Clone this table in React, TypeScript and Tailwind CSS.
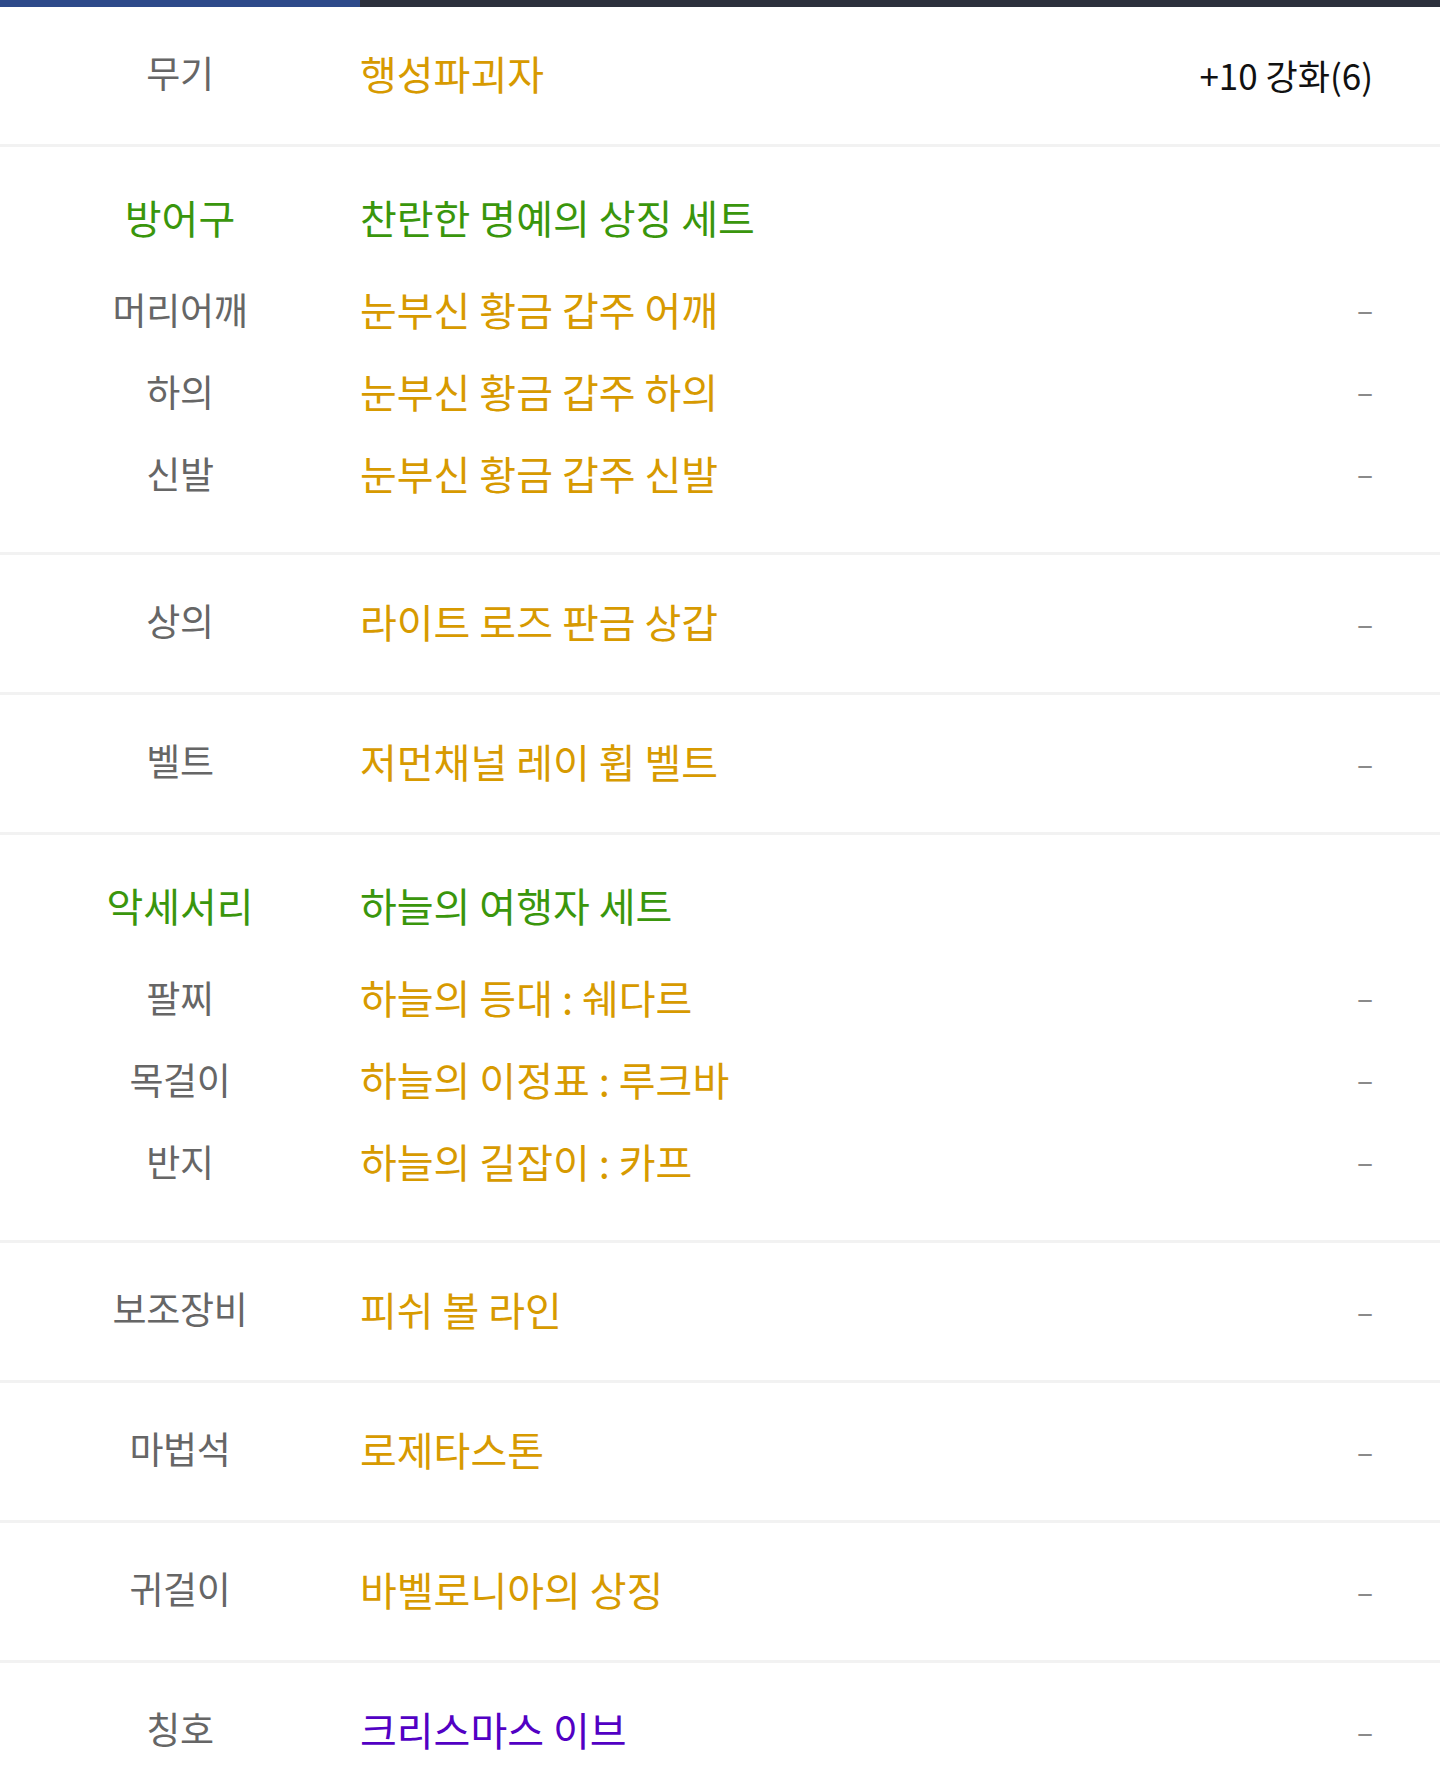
import React from "react";

type Item = { slot: string; name: string; value?: string; color?: "orange" | "purple" };
type Group = { title: string; set: string; items: Item[] };
type Entry = { kind: "single"; item: Item } | { kind: "group"; group: Group };

const entries: Entry[] = [
  { kind: "single", item: { slot: "무기", name: "행성파괴자", value: "+10 강화(6)" } },
  {
    kind: "group",
    group: {
      title: "방어구",
      set: "찬란한 명예의 상징 세트",
      items: [
        { slot: "머리어깨", name: "눈부신 황금 갑주 어깨" },
        { slot: "하의", name: "눈부신 황금 갑주 하의" },
        { slot: "신발", name: "눈부신 황금 갑주 신발" },
      ],
    },
  },
  { kind: "single", item: { slot: "상의", name: "라이트 로즈 판금 상갑" } },
  { kind: "single", item: { slot: "벨트", name: "저먼채널 레이 휩 벨트" } },
  {
    kind: "group",
    group: {
      title: "악세서리",
      set: "하늘의 여행자 세트",
      items: [
        { slot: "팔찌", name: "하늘의 등대 : 쉐다르" },
        { slot: "목걸이", name: "하늘의 이정표 : 루크바" },
        { slot: "반지", name: "하늘의 길잡이 : 카프" },
      ],
    },
  },
  { kind: "single", item: { slot: "보조장비", name: "피쉬 볼 라인" } },
  { kind: "single", item: { slot: "마법석", name: "로제타스톤" } },
  { kind: "single", item: { slot: "귀걸이", name: "바벨로니아의 상징" } },
  { kind: "single", item: { slot: "칭호", name: "크리스마스 이브", color: "purple" } },
];

function Value({ value }: { value?: string }) {
  if (value) {
    return <span className="text-[35px] leading-none text-[#111111]">{value}</span>;
  }
  return <span className="text-[30px] leading-none text-[#8a8a8a]">–</span>;
}

function Line({ item, tall }: { item: Item; tall?: boolean }) {
  const nameColor = item.color === "purple" ? "text-[#5200c4]" : "text-[#d79a00]";
  return (
    <div className={`flex items-center ${tall ? "h-[137px]" : "h-[82px]"}`}>
      <div
        className={`w-[360px] shrink-0 text-center text-[37px] leading-none tracking-[-0.3px] text-[#666666] ${
          tall ? "pb-[6px]" : ""
        }`}
      >
        {item.slot}
      </div>
      <div className={`flex-1 text-[40px] leading-none ${nameColor} ${tall ? "pb-[6px]" : ""}`}>
        {item.name}
      </div>
      <div className="pr-[67px] text-right">
        <Value value={item.value} />
      </div>
    </div>
  );
}

function GroupBlock({ group }: { group: Group }) {
  return (
    <div className="pt-[29px] pb-[38px]">
      <div className="mb-[10px] flex h-[82px] items-center">
        <div className="w-[360px] shrink-0 text-center text-[40px] leading-none text-[#3a960c]">
          {group.title}
        </div>
        <div className="flex-1 text-[40px] leading-none text-[#3a960c]">{group.set}</div>
      </div>
      {group.items.map((it) => (
        <Line key={it.slot} item={it} />
      ))}
    </div>
  );
}

export default function App() {
  return (
    <div
      className="min-h-screen w-full bg-white"
      style={{ fontFamily: '"Noto Sans CJK KR", "Noto Sans", sans-serif' }}
    >
      <div className="flex h-[7px] w-full">
        <div className="w-[360px] bg-[#2e4a8a]" />
        <div className="flex-1 bg-[#2c303c]" />
      </div>
      <div className="flex flex-col">
        {entries.map((e, i) => (
          <div key={i} className={i > 0 ? "border-t-[3px] border-[#f2f2f2]" : ""}>
            {e.kind === "single" ? <Line item={e.item} tall /> : <GroupBlock group={e.group} />}
          </div>
        ))}
      </div>
    </div>
  );
}
